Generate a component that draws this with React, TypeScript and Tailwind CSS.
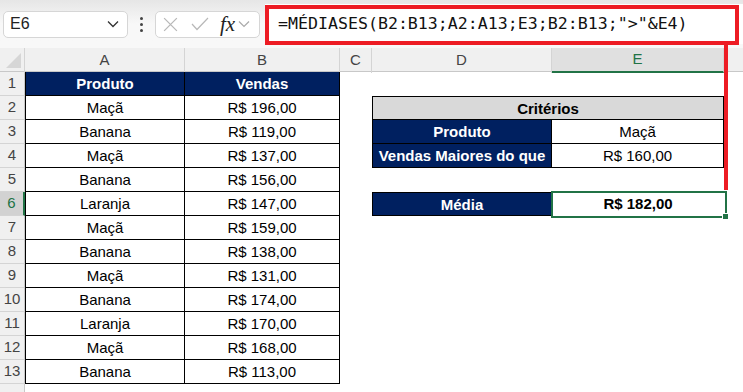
import React from "react";

const navy = "bg-[#002060] text-white font-bold";

const data: [string, string][] = [
  ["Maçã", "R$ 196,00"],
  ["Banana", "R$ 119,00"],
  ["Maçã", "R$ 137,00"],
  ["Banana", "R$ 156,00"],
  ["Laranja", "R$ 147,00"],
  ["Maçã", "R$ 159,00"],
  ["Banana", "R$ 138,00"],
  ["Maçã", "R$ 131,00"],
  ["Banana", "R$ 174,00"],
  ["Laranja", "R$ 170,00"],
  ["Maçã", "R$ 168,00"],
  ["Banana", "R$ 113,00"],
];

const gridCols = "grid grid-cols-[25px_160px_155px_32px_180px_172px_19px] h-[24px]";

function RowHeader({ n, selected }: { n: number; selected?: boolean }) {
  return (
    <div
      className={`flex items-center justify-center border-b border-[#d4d4d4] text-[15px] ${
        selected ? "bg-[#d2d2d2] text-[#217346] border-r-2 border-r-[#217346]" : "bg-[#f0f0f0] text-[#444] border-r border-r-[#c8c8c8]"
      }`}
    >
      {n}
    </div>
  );
}

function Cell({ className = "", children }: { className?: string; children?: React.ReactNode }) {
  return <div className={`flex items-center justify-center text-[15px] leading-none ${className}`}>{children}</div>;
}

function renderDE(row: number) {
  if (row === 2) {
    return (
      <Cell className="col-span-2 bg-[#d9d9d9] font-bold border border-black text-black">Critérios</Cell>
    );
  }
  if (row === 3) {
    return (
      <>
        <Cell className={`${navy} border-l border-r border-b border-black`}>Produto</Cell>
        <Cell className="border-r border-b border-black text-black">Maçã</Cell>
      </>
    );
  }
  if (row === 4) {
    return (
      <>
        <Cell className={`${navy} border-l border-r border-b border-black`}>Vendas Maiores do que</Cell>
        <Cell className="border-r border-b border-black text-black">R$ 160,00</Cell>
      </>
    );
  }
  if (row === 6) {
    return (
      <>
        <Cell className={`${navy} border border-black`}>Média</Cell>
        <div className="relative flex items-center justify-center text-[15px] font-bold text-black">
          R$ 182,00
          <div className="absolute -left-[1px] -top-[1px] -right-[3px] -bottom-[2px] border-2 border-[#217346]" />
          <div className="absolute -right-[5px] -bottom-[4px] w-[7px] h-[7px] bg-[#217346] border border-white" />
        </div>
      </>
    );
  }
  return (
    <>
      <div />
      <div />
    </>
  );
}

export default function App() {
  return (
    <div
      className="relative w-[743px] h-[392px] overflow-hidden bg-white"
      style={{ fontFamily: '"Liberation Sans", Arial, sans-serif' }}
    >
      {/* Toolbar */}
      <div className="h-[48px] flex items-center bg-[#f7f7f7] bg-gradient-to-b from-[#e6e6e6] via-[#f8f8f8] to-[#f8f8f8] pl-[3px]">
        <div className="w-[125px] h-[27px] bg-white border border-[#d6d6d6] rounded-[5px] flex items-center justify-between pl-[6px] pr-[8px]">
          <span className="text-[16px] text-[#222]">E6</span>
          <svg width="12" height="8" viewBox="0 0 12 8">
            <path d="M1 1.5 L6 6.5 L11 1.5" fill="none" stroke="#333" strokeWidth="1.3" />
          </svg>
        </div>
        <div className="w-[27px] flex flex-col items-center gap-[3px]">
          <div className="w-[3px] h-[3px] bg-[#444] rounded-full" />
          <div className="w-[3px] h-[3px] bg-[#444] rounded-full" />
          <div className="w-[3px] h-[3px] bg-[#444] rounded-full" />
        </div>
        <div className="w-[105px] h-[27px] bg-white border border-[#d6d6d6] rounded-[5px] flex items-center pl-[6px]">
          <svg width="17" height="17" viewBox="0 0 16 16">
            <path d="M2 2 L14 14 M14 2 L2 14" stroke="#b8b8b8" strokeWidth="1.2" fill="none" />
          </svg>
          <svg width="20" height="16" viewBox="0 0 20 16" className="ml-[11px]">
            <path d="M2 8 L7 13.5 L18 2" stroke="#b8b8b8" strokeWidth="1.2" fill="none" />
          </svg>
          <span
            className="ml-[10px] text-[21px] italic text-[#222] leading-none"
            style={{ fontFamily: '"Liberation Serif", "Times New Roman", serif' }}
          >
            fx
          </span>
          <svg width="12" height="8" viewBox="0 0 12 8" className="ml-[3px]">
            <path d="M1 1.5 L6 6.5 L11 1.5" fill="none" stroke="#aaa" strokeWidth="1.2" />
          </svg>
        </div>
        <div className="ml-[5px] flex-1 h-[40px] bg-white flex items-center pl-[13px]">
          <span
            className="text-[16.6px] text-[#111] whitespace-nowrap"
            style={{ fontFamily: '"DejaVu Sans Mono", "Liberation Mono", monospace' }}
          >
            =MÉDIASES(B2:B13;A2:A13;E3;B2:B13;"&gt;"&amp;E4)
          </span>
        </div>
      </div>

      {/* Column headers */}
      <div className={`${gridCols} bg-[#f0f0f0] border-b border-[#c8c8c8]`}>
        <div className="relative border-r border-[#d4d4d4]">
          <svg width="25" height="24" viewBox="0 0 25 24" className="absolute inset-0">
            <path d="M21 5 L21 20 L6 20 Z" fill="#d6d6d6" />
          </svg>
        </div>
        {["A", "B", "C", "D"].map((c) => (
          <div key={c} className="flex items-center justify-center text-[15px] text-[#444] border-r border-[#d4d4d4]">
            {c}
          </div>
        ))}
        <div className="flex items-center justify-center text-[15px] text-[#217346] bg-[#e0e0e0] border-b-2 border-[#217346] border-r border-r-[#d4d4d4]">
          E
        </div>
        <div />
      </div>

      {/* Rows */}
      {Array.from({ length: 13 }, (_, i) => {
        const row = i + 1;
        if (row === 1) {
          return (
            <div key={row} className={gridCols}>
              <RowHeader n={row} />
              <Cell className={`${navy} border-l border-r border-b border-black`}>Produto</Cell>
              <Cell className={`${navy} border-r border-b border-black`}>Vendas</Cell>
              <div />
              <div />
              <div />
              <div />
            </div>
          );
        }
        const [p, v] = data[row - 2];
        return (
          <div key={row} className={gridCols}>
            <RowHeader n={row} selected={row === 6} />
            <Cell className="border-l border-r border-b border-black text-black">{p}</Cell>
            <Cell className="border-r border-b border-black text-black">{v}</Cell>
            <div />
            {renderDE(row)}
            <div />
          </div>
        );
      })}
      <div className="grid grid-cols-[25px_1fr] h-[8px]">
        <div className="bg-[#f0f0f0] border-r border-[#c8c8c8]" />
        <div />
      </div>

      {/* Red annotation */}
      <div className="absolute left-[265px] top-[5px] w-[474px] h-[40px] border-4 border-[#ed1c24]" />
      <div className="absolute left-[724px] top-[42px] w-[4px] h-[148px] bg-[#ed1c24]" />
    </div>
  );
}
